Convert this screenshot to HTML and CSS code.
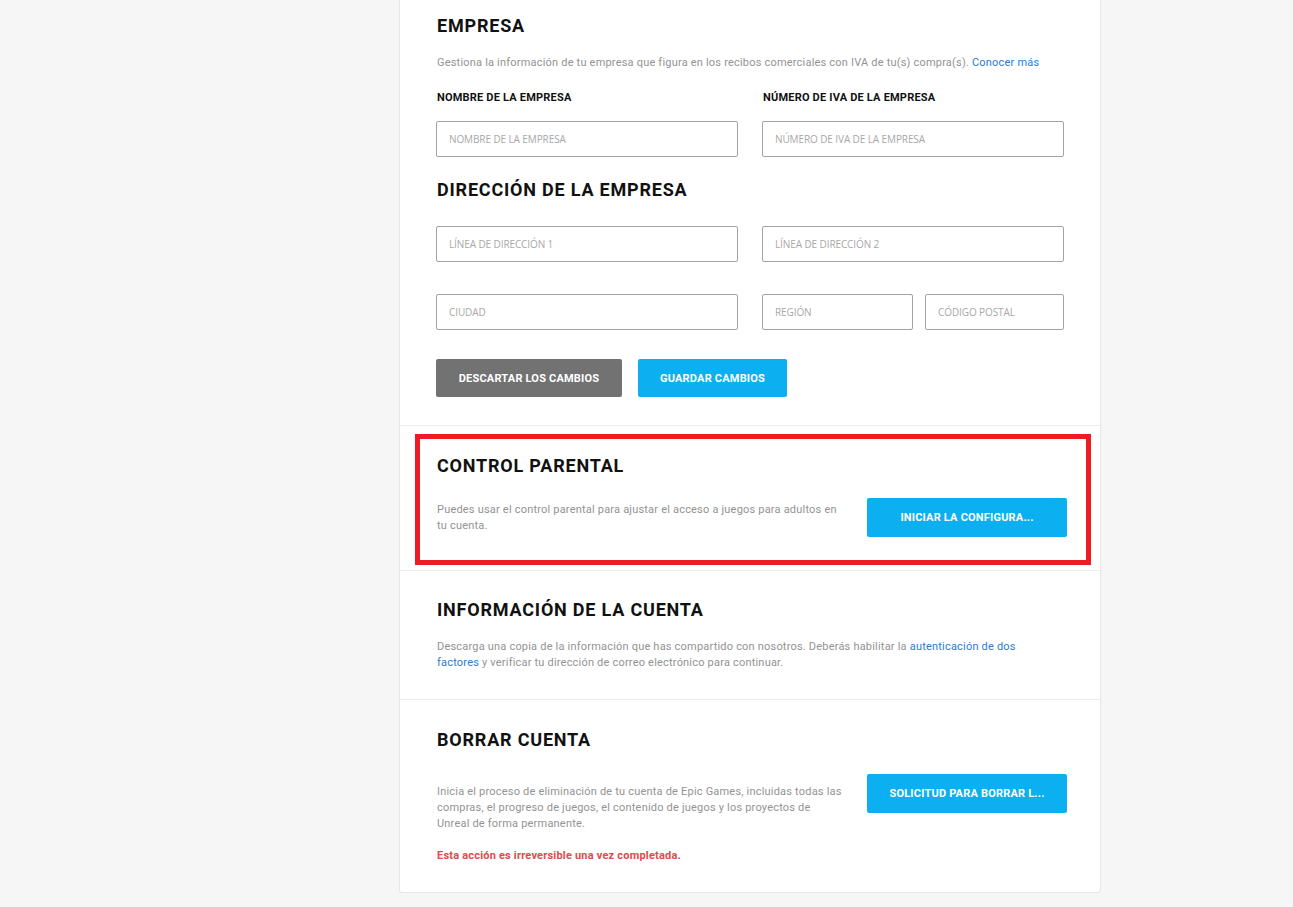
FILE: index.html
```html
<!DOCTYPE html>
<html lang="es">
<head>
<meta charset="utf-8">
<title>Cuenta</title>
<link rel="stylesheet" href="styles.css">
</head>
<body>
<div class="page">
  <div class="card">
    <section class="section s-company">
      <h2 class="title">EMPRESA</h2>
      <p class="desc">Gestiona la información de tu empresa que figura en los recibos comerciales con IVA de tu(s) compra(s). <a class="link" href="#">Conocer más</a></p>
      <div class="grid labels">
        <div class="label">NOMBRE DE LA EMPRESA</div>
        <div class="label">NÚMERO DE IVA DE LA EMPRESA</div>
      </div>
      <div class="grid">
        <input class="field" placeholder="NOMBRE DE LA EMPRESA">
        <input class="field" placeholder="NÚMERO DE IVA DE LA EMPRESA">
      </div>
      <h2 class="title t-address">DIRECCIÓN DE LA EMPRESA</h2>
      <div class="grid row-a">
        <input class="field" placeholder="LÍNEA DE DIRECCIÓN 1">
        <input class="field" placeholder="LÍNEA DE DIRECCIÓN 2">
      </div>
      <div class="grid row-b">
        <input class="field" placeholder="CIUDAD">
        <div class="sub">
          <input class="field" placeholder="REGIÓN">
          <input class="field" placeholder="CÓDIGO POSTAL">
        </div>
      </div>
      <div class="actions">
        <button class="btn btn-gray">DESCARTAR LOS CAMBIOS</button>
        <button class="btn btn-blue">GUARDAR CAMBIOS</button>
      </div>
    </section>

    <section class="section s-parental">
      <h2 class="title">CONTROL PARENTAL</h2>
      <div class="split center">
        <p class="desc text">Puedes usar el control parental para ajustar el acceso a juegos para adultos en tu cuenta.</p>
        <button class="btn btn-blue wide">INICIAR LA CONFIGURA...</button>
      </div>
      <div class="highlight"></div>
    </section>

    <section class="section s-info">
      <h2 class="title">INFORMACIÓN DE LA CUENTA</h2>
      <p class="desc info-text">Descarga una copia de la información que has compartido con nosotros. Deberás habilitar la <a class="link" href="#">autenticación de dos factores</a> y verificar tu dirección de correo electrónico para continuar.</p>
    </section>

    <section class="section s-delete">
      <h2 class="title">BORRAR CUENTA</h2>
      <div class="split top">
        <div class="text del-text">
          <p class="desc">Inicia el proceso de eliminación de tu cuenta de Epic Games, incluidas todas las compras, el progreso de juegos, el contenido de juegos y los proyectos de Unreal de forma permanente.</p>
          <p class="warn">Esta acción es irreversible una vez completada.</p>
        </div>
        <button class="btn btn-blue wide">SOLICITUD PARA BORRAR L...</button>
      </div>
    </section>
  </div>
</div>
</body>
</html>
```
FILE: styles.css
```css
* { box-sizing: border-box; }
html, body { margin: 0; padding: 0; }
body {
  background: #f6f6f6;
  font-family: Roboto, "Liberation Sans", sans-serif;
  color: #111;
  height: 907px;
  overflow: hidden;
}
.page { padding-left: 399px; }
.card {
  width: 702px;
  background: #fff;
  border: 1px solid #e6e6e6;
  border-top: none;
  border-radius: 0 0 3px 3px;
}
.section {
  position: relative;
  padding: 0 36px 0 36px;
  border-bottom: 1px solid #ececec;
}
.section:last-child { border-bottom: none; }
.title {
  margin: 0;
  font-size: 18px;
  line-height: 22px;
  font-weight: 700;
  letter-spacing: 0.8px;
  color: #111;
  padding-left: 1px;
}
.desc {
  margin: 0;
  font-size: 11px;
  line-height: 16px;
  letter-spacing: 0.2px;
  color: #939393;
  padding-left: 1px;
}
.link { color: #2e7bd0; text-decoration: none; }
.s-company { padding-top: 15px; padding-bottom: 28px; }
.s-company .desc { margin-top: 18px; }
.grid {
  display: grid;
  grid-template-columns: 302px 302px;
  column-gap: 24px;
}
.labels { margin-top: 19px; margin-bottom: 15px; }
.label {
  font-size: 11px;
  line-height: 16px;
  font-weight: 700;
  letter-spacing: 0.2px;
  color: #111;
  padding-left: 1px;
}
.field {
  display: block;
  width: 100%;
  height: 36px;
  margin: 0;
  border: 1px solid #a3a3a3;
  border-radius: 2px;
  padding: 0 12px;
  font-family: "Open Sans", Roboto, sans-serif;
  font-size: 10px;
  letter-spacing: -0.1px;
  color: #333;
  background: #fff;
  outline: none;
}
.field::placeholder { color: #a8a8a8; }
.t-address { margin-top: 22px; }
.row-a { margin-top: 25px; }
.row-b { margin-top: 32px; }
.sub {
  display: grid;
  grid-template-columns: 151px 139px;
  column-gap: 12px;
}
.actions {
  display: flex;
  gap: 16px;
  margin-top: 29px;
}
.btn {
  height: 38px;
  border: none;
  border-radius: 2px;
  padding: 0 20px;
  font-family: Roboto, "Liberation Sans", sans-serif;
  font-size: 11px;
  font-weight: 700;
  letter-spacing: 0.2px;
  color: #fff;
  cursor: pointer;
  white-space: nowrap;
}
.btn-gray { background: #727272; width: 186px; }
.btn-blue { background: #0caff0; }
.actions .btn-blue { width: 149px; }
.wide { width: 200px; height: 39px; flex: none; }
.s-parental { padding-top: 29px; padding-bottom: 33px; padding-right: 33px; }
.split {
  display: flex;
  justify-content: space-between;
}
.split.center { align-items: center; margin-top: 21px; }
.split.top { align-items: flex-start; margin-top: 23px; }
.text { width: 408px; }
.highlight {
  position: absolute;
  top: 8px;
  left: 15px;
  right: 9px;
  bottom: 5px;
  border: 5px solid #ed1c24;
  pointer-events: none;
}
.s-info { padding-top: 28px; padding-bottom: 28px; }
.info-text { margin-top: 18px; max-width: 612px; }
.s-delete { padding-top: 29px; padding-bottom: 28px; padding-right: 33px; }
.del-text { margin-top: 10px; }
.warn {
  margin: 16px 0 0;
  font-size: 11px;
  line-height: 16px;
  font-weight: 700;
  letter-spacing: 0.2px;
  color: #e04a4a;
  padding-left: 1px;
}
```
